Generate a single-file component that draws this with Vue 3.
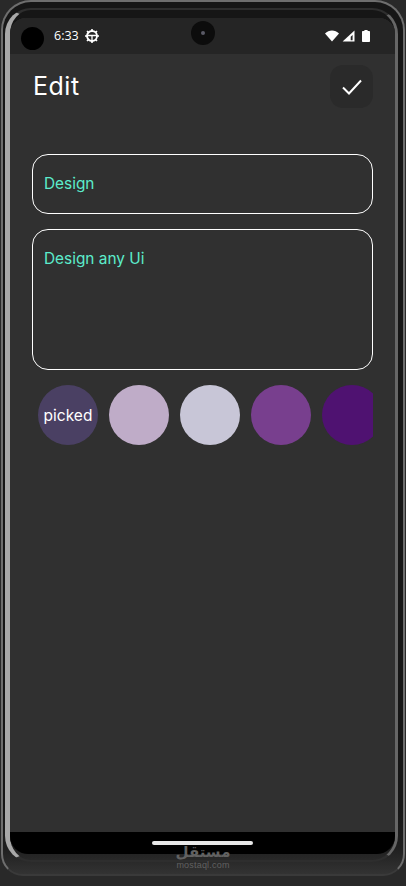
<script setup>
const colors = [
  { value: '#4a4063', label: 'picked' },
  { value: '#bfacc8', label: '' },
  { value: '#c8c6d7', label: '' },
  { value: '#783f8e', label: '' },
  { value: '#4f1271', label: '' }
];
</script>

<template>
  <div class="device">
    <div class="bezel"></div>
    <div class="edge"></div>
    <div class="screen">
      <div class="status">
        <span class="punch"></span>
        <span class="time">6:33</span>
        <svg class="gear" width="14" height="14" viewBox="0 0 14 14">
          <circle cx="7" cy="7" r="5" fill="none" stroke="#fff" stroke-width="1.900" />
          <path d="M7 0v2M7 12v2M0 7h2M12 7h2M2 2l1.400 1.400M12 2l-1.400 1.400M2 12l1.400-1.400M12 12l-1.400-1.400" stroke="#fff" stroke-width="1.600" fill="none" />
          <path d="M2.600 6.500h8.800M7 6.500v4.500" stroke="#fff" stroke-width="1.300" fill="none" />
        </svg>
        <span class="camera"><span class="lens"></span></span>
        <span class="status-icons">
          <svg width="14" height="12" viewBox="0 0 14 12">
            <path d="M0 3.600C2 1.600 4.400.6 7 .6s5 1 7 3L7 11.600z" fill="#fff" />
          </svg>
          <svg width="13" height="12" viewBox="0 0 13 12">
            <path d="M12.500.6v11H.6z" fill="#fff" />
            <path d="M10.600 5v5.300H8.700V6.800z" fill="#252525" />
          </svg>
          <svg class="battery" width="8" height="12" viewBox="0 0 8 12">
            <path d="M2.400 0h3.200v1H7.200q.8 0 .8 .8V11.200q0 .8-.8 .8H.8q-.8 0-.8-.8V1.800q0-.8 .8-.8H2.400z" fill="#fff" />
          </svg>
        </span>
      </div>

      <div class="content">
        <div class="app-bar">
          <h1 class="title">Edit</h1>
          <button class="save">
            <svg width="22" height="18" viewBox="0 0 22 18">
              <path d="M2 9.500l6 6L20 2.500" fill="none" stroke="#fff" stroke-width="2" />
            </svg>
          </button>
        </div>

        <div class="field field-title">Design</div>
        <div class="field field-body">Design any Ui</div>

        <div class="swatches">
          <div
            v-for="c in colors"
            :key="c.value"
            class="swatch"
            :style="{ backgroundColor: c.value }"
          >{{ c.label }}</div>
        </div>
      </div>

      <div class="nav"><span class="handle"></span></div>
    </div>

    <div class="watermark">
      <span class="wm-ar">مستقل</span>
      <span class="wm-en">mostaql.com</span>
    </div>
  </div>
</template>

<style scoped>
.device {
  position: relative;
  width: 406px;
  height: 886px;
  box-sizing: border-box;
  padding: 18px 11px 32px 10px;
  background: #292929;
  overflow: hidden;
  font-family: Inter, "Open Sans", sans-serif;
}
.bezel {
  position: absolute;
  left: 1px;
  right: 1px;
  top: 0;
  bottom: 10px;
  box-sizing: border-box;
  border-radius: 30px 30px 22px 22px;
  border: 2px solid #6e6e6e;
  border-bottom-color: #3a3a3a;
  background: linear-gradient(#161616 0, #161616 92%, #1f1f1f 97%, #333 100%);
}
.edge {
  position: absolute;
  left: 5px;
  right: 8px;
  top: 8px;
  bottom: 24px;
  box-sizing: border-box;
  border-radius: 26px;
  border-style: solid;
  border-width: 2px 3px 2px 5px;
  border-color: #2e2e2e #666 #2e2e2e #a8a8a8;
}
.screen {
  position: relative;
  height: 100%;
  display: flex;
  flex-direction: column;
  border-radius: 16px 16px 18px 18px;
  overflow: hidden;
  background: #303030;
}
.status {
  height: 36px;
  flex: none;
  display: flex;
  align-items: center;
  position: relative;
  background: #252525;
  color: #fff;
}
.punch {
  width: 23px;
  height: 23px;
  margin: 4px 0 0 11px;
  border-radius: 50%;
  background: #000;
}
.time {
  margin-left: 10px;
  font-family: "Open Sans", sans-serif;
  font-size: 12.500px;
  line-height: 1;
}
.gear {
  margin-left: 6px;
}
.camera {
  position: absolute;
  left: 181px;
  top: 3px;
  width: 24px;
  height: 24px;
  border-radius: 50%;
  background: #0c0c0c;
  display: flex;
  align-items: center;
  justify-content: center;
}
.lens {
  width: 4px;
  height: 4px;
  border-radius: 50%;
  background: #5a5a66;
}
.status-icons {
  margin-left: auto;
  margin-right: 25px;
  display: flex;
  align-items: center;
  gap: 3px;
}
.battery {
  margin-left: 4px;
}
.content {
  flex: 1;
  padding: 11px 22px 0 22px;
  display: flex;
  flex-direction: column;
  min-height: 0;
}
.app-bar {
  display: flex;
  align-items: center;
  justify-content: space-between;
  height: 43px;
  margin-bottom: 46px;
}
.title {
  margin: 0 0 0 1px;
  font-size: 25px;
  font-weight: 400;
  line-height: 1;
  letter-spacing: .5px;
  color: #fff;
}
.save {
  width: 43px;
  height: 43px;
  padding: 0;
  border: none;
  border-radius: 13px;
  background: #2a2a2a;
  display: flex;
  align-items: center;
  justify-content: center;
}
.field {
  box-sizing: border-box;
  border: 1px solid #fff;
  border-radius: 16px;
  padding: 0 11px;
  color: #5ceccc;
  font-size: 15.400px;
  line-height: 20px;
}
.field-title {
  height: 60px;
  padding-top: 19px;
  margin-bottom: 15px;
}
.field-body {
  height: 141px;
  padding-top: 19px;
  margin-bottom: 15px;
}
.swatches {
  display: flex;
  gap: 11.100px;
  padding-left: 6px;
  overflow: hidden;
}
.swatch {
  flex: none;
  width: 60px;
  height: 60px;
  border-radius: 50%;
  display: flex;
  align-items: center;
  justify-content: center;
  color: #fff;
  font-size: 15.500px;
}
.nav {
  flex: none;
  height: 22px;
  background: #000;
  display: flex;
  justify-content: center;
  padding-top: 9px;
  box-sizing: border-box;
}
.handle {
  width: 101px;
  height: 4px;
  border-radius: 2px;
  background: #e8e8e8;
}
.watermark {
  position: absolute;
  left: 153px;
  top: 843px;
  width: 100px;
  display: flex;
  flex-direction: column;
  align-items: center;
  color: #616161;
}
.wm-ar {
  font-family: "DejaVu Sans", sans-serif;
  font-weight: 700;
  font-size: 15px;
  line-height: 18px;
}
.wm-en {
  font-family: "Liberation Sans", sans-serif;
  font-size: 9px;
  line-height: 9px;
  letter-spacing: .2px;
}
</style>
